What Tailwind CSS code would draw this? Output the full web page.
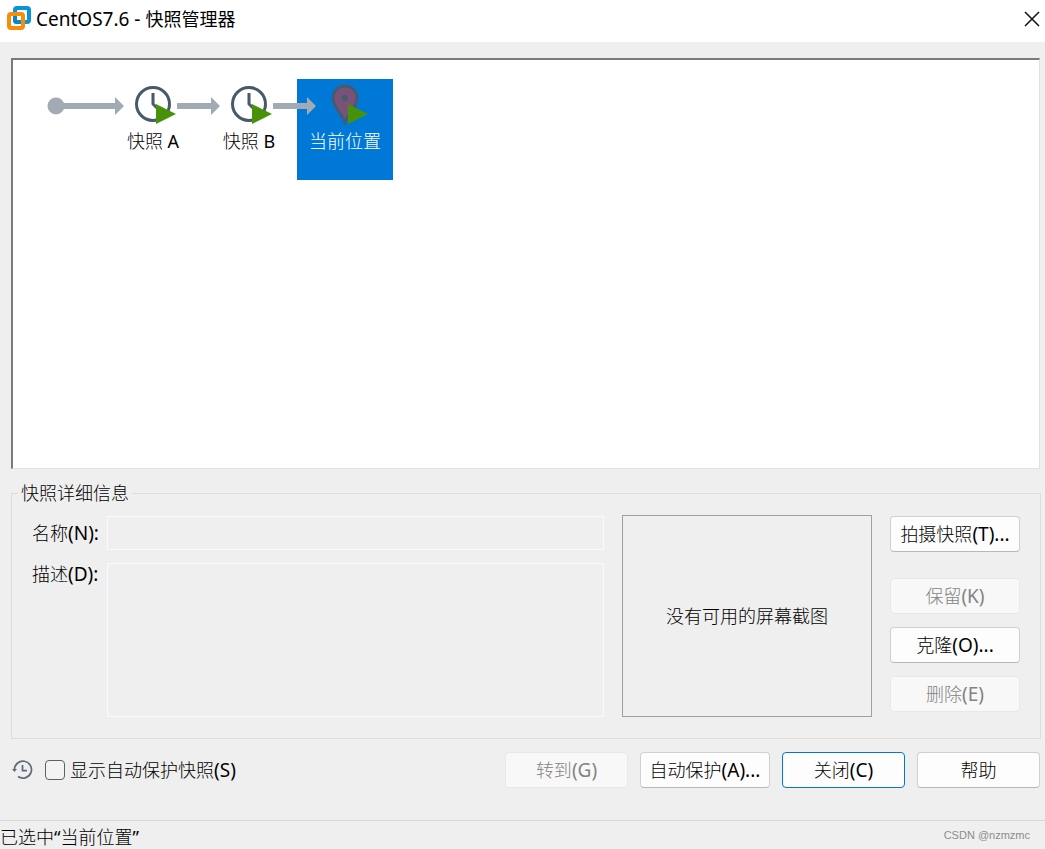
<!DOCTYPE html>
<html lang="zh-CN">
<head>
  <meta charset="UTF-8">
  <meta name="viewport" content="width=device-width, initial-scale=1.0">
  <title>CentOS7.6 - 快照管理器</title>
  <script src="https://cdn.jsdelivr.net/npm/@tailwindcss/browser@4"></script>
</head>
<body class="flex min-h-screen flex-col bg-[#efefef] font-['Noto_Sans','Noto_Sans_CJK_SC',sans-serif] text-[18px] font-light leading-6 text-black">

  <!-- Title bar -->
  <header class="flex h-[42px] items-center bg-white pb-1 pl-[6px] pr-[3px]">
    <svg class="h-[26px] w-[26px] shrink-0" viewBox="0 0 26 26" fill="none" stroke-width="4">
      <rect x="9" y="2" width="14" height="14" rx="2" stroke="#0795d8"/>
      <rect x="3" y="8" width="14" height="14" rx="2" stroke="#f78e0a"/>
      <path d="M9 10V14q0 2 2 2H15" stroke="#0b87c8"/>
    </svg>
    <h1 class="ml-1 flex-1 font-normal"><span class="text-[19px]">CentOS7.6 - </span>快照管理器</h1>
    <button type="button" aria-label="关闭窗口" class="flex h-5 w-5 items-center justify-center">
      <svg class="h-4 w-4" viewBox="0 0 16 16" stroke="#111" stroke-width="1.500"><path d="M1 1l14 14M15 1L1 15"/></svg>
    </button>
  </header>

  <main class="flex flex-1 flex-col pl-[11px] pr-[5px] pt-4">
    <!-- Snapshot tree -->
    <section class="flex min-h-64 flex-1 border-b border-l-2 border-r border-t-2 border-b-[#e0e0e0] border-l-[#7b7b7b] border-r-[#e0e0e0] border-t-[#7b7b7b] bg-white pl-[92px] pt-[19px]">
      <div class="flex h-[101px] w-24 flex-col items-center">
        <svg class="h-[50px] w-24 shrink-0 overflow-visible" viewBox="0 0 96 50">
          <circle cx="-49" cy="27" r="8.500" fill="#a2abb3"/>
          <path d="M-49 24H10V18L19 27L10 36V30H-49z" fill="#a2abb3"/>
          <circle cx="48" cy="25" r="16.500" fill="none" stroke="#485a67" stroke-width="3"/>
          <path d="M48 14v11l5 5" fill="none" stroke="#485a67" stroke-width="3"/>
          <path d="M51 25v20l20-10z" fill="#479209"/>
        </svg>
        <span>快照 <span class="font-normal">A</span></span>
      </div>
      <div class="flex h-[101px] w-24 flex-col items-center">
        <svg class="h-[50px] w-24 shrink-0 overflow-visible" viewBox="0 0 96 50">
          <path d="M-24 24H10V18L19 27L10 36V30H-24z" fill="#a2abb3"/>
          <circle cx="48" cy="25" r="16.500" fill="none" stroke="#485a67" stroke-width="3"/>
          <path d="M48 14v11l5 5" fill="none" stroke="#485a67" stroke-width="3"/>
          <path d="M51 25v20l20-10z" fill="#479209"/>
        </svg>
        <span>快照 <span class="font-normal">B</span></span>
      </div>
      <div class="flex h-[101px] w-24 flex-col items-center bg-[#0078d7] text-white">
        <svg class="h-[50px] w-24 shrink-0 overflow-visible" viewBox="0 0 96 50">
          <path d="M-24 24H10V18L19 27L10 36V30H-24z" fill="#a2abb3"/>
          <path d="M48 43C45 35 36 28 36 19a12 12 0 0 1 24 0C60 28 51 35 48 43z" fill="#7b5277" stroke="#445b72" stroke-width="3"/>
          <circle cx="48" cy="19" r="3" fill="#445b72"/>
          <path d="M51 25v20l20-10z" fill="#479209"/>
        </svg>
        <span>当前位置</span>
      </div>
    </section>

    <!-- Snapshot details -->
    <fieldset class="-mr-px mt-3 flex gap-[18px] border border-[#dcdcdc] pb-[21px] pl-5 pr-5 pt-[10px]">
      <legend class="-ml-[14px] px-[3px]">快照详细信息</legend>
      <div class="grid flex-1 grid-cols-[75px_1fr] grid-rows-[34px_1fr] gap-y-[13px] pt-px">
        <label for="name" class="pt-[5px]">名称<span class="text-[19px] font-normal">(N):</span></label>
        <input id="name" type="text" disabled class="w-full min-w-0 border border-[#fafafa]">
        <label for="desc" class="-mt-px">描述<span class="text-[19px] font-normal">(D):</span></label>
        <textarea id="desc" disabled class="w-full resize-none border border-[#fafafa]"></textarea>
      </div>
      <div class="flex h-[202px] w-[250px] items-center justify-center border border-[#a0a0a0]">没有可用的屏幕截图</div>
      <div class="flex w-[130px] flex-col gap-[13px] pt-px">
        <button type="button" class="mb-[13px] h-9 rounded border border-[#d0d0d0] border-b-[#b8b8b8] bg-[#fdfdfd]">拍摄快照<span class="text-[19px] font-normal">(T)...</span></button>
        <button type="button" disabled class="h-9 rounded border border-[#e8e8e8] bg-[#f8f8f8] text-[#838383]">保留<span class="text-[19px] font-normal">(K)</span></button>
        <button type="button" class="h-9 rounded border border-[#d0d0d0] border-b-[#b8b8b8] bg-[#fdfdfd]">克隆<span class="text-[19px] font-normal">(O)...</span></button>
        <button type="button" disabled class="h-9 rounded border border-[#e8e8e8] bg-[#f8f8f8] text-[#838383]">删除<span class="text-[19px] font-normal">(E)</span></button>
      </div>
    </fieldset>

    <!-- Actions -->
    <div class="mb-8 mt-[13px] flex items-center gap-3">
      <svg class="h-[22px] w-[22px]" viewBox="0 0 22 22" fill="none" stroke="#5f6c78" stroke-width="1.750">
        <path d="M3.500 11a8.500 8.500 0 1 1 3.500 6.500M11.500 6v5.500H16"/>
        <path d="M1 10h5l-2.500 3z" fill="#5f6c78" stroke="none"/>
      </svg>
      <label class="mr-auto flex items-center gap-[5px]">
        <input type="checkbox" class="h-5 w-5 appearance-none rounded border border-[#606060] bg-[#f3f3f3]">
        <span>显示自动保护快照<span class="text-[19px] font-normal">(S)</span></span>
      </label>
      <button type="button" disabled class="h-9 w-[123px] rounded border border-[#e8e8e8] bg-[#f8f8f8] text-[#838383]">转到<span class="text-[19px] font-normal">(G)</span></button>
      <button type="button" class="h-9 w-[130px] rounded border border-[#d0d0d0] border-b-[#b8b8b8] bg-[#fdfdfd]">自动保护<span class="text-[19px] font-normal">(A)...</span></button>
      <button type="button" class="h-9 w-[123px] rounded border border-[#0078d4] bg-[#fdfdfd]">关闭<span class="text-[19px] font-normal">(C)</span></button>
      <button type="button" class="h-9 w-[123px] rounded border border-[#d0d0d0] border-b-[#b8b8b8] bg-[#fdfdfd]">帮助</button>
    </div>
  </main>

  <!-- Status bar -->
  <footer class="flex h-[29px] items-center justify-between border-t border-[#d7d7d7] pr-[15px]">
    <span class="pt-[3px]">已选中<span class="font-normal">“</span>当前位置<span class="font-normal">”</span></span>
    <span class="font-['Liberation_Sans',sans-serif] text-[11px] font-normal text-[#8c8c8c]">CSDN @nzmzmc</span>
  </footer>

</body>
</html>
